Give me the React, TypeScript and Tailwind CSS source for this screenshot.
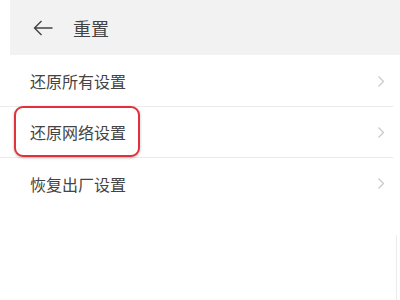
import React from "react";

const font = { fontFamily: '"Noto Sans CJK SC", "Noto Sans", sans-serif' };

function Chevron() {
  return (
    <svg width="8" height="13" viewBox="0 0 8 13" className="shrink-0">
      <path d="M1.5 1.5 L6.5 6.5 L1.5 11.5" fill="none" stroke="#c8c8c8" strokeWidth="1.2" />
    </svg>
  );
}

function Row({ label, boxed, last }: { label: string; boxed?: boolean; last?: boolean }) {
  return (
    <div className={`relative flex h-[51px] items-center justify-between pl-[30px] pr-[8px] ${last ? "" : "border-b border-[#ebebeb]"}`}>
      <span className="text-[16px] text-[#444] leading-none">{label}</span>
      <Chevron />
      {boxed && (
        <div className="absolute left-[14px] top-[-1px] h-[51px] w-[126px] rounded-[9px] border-2 border-[#e0323c] bg-white shadow-[0_1px_3px_rgba(0,0,0,0.25)] flex items-center pl-[14px]">
          <span className="text-[16px] text-[#444] leading-none">{label}</span>
        </div>
      )}
    </div>
  );
}

export default function App() {
  return (
    <div className="relative w-[400px] h-[300px] bg-white overflow-hidden" style={font}>
      <div className="ml-[10px] h-[55px] bg-[#f2f2f2] flex items-center pl-[22px]">
        <svg width="22" height="18" viewBox="0 0 22 18">
          <path d="M9.5 2 L2.5 9 L9.5 16 M2.5 9 L20.5 9" fill="none" stroke="#444" strokeWidth="1.4" />
        </svg>
        <span className="ml-[19px] text-[18px] text-[#444] leading-none">重置</span>
      </div>
      <div className="mt-[1px] w-[393px]">
        <Row label="还原所有设置" />
        <Row label="还原网络设置" boxed />
        <Row label="恢复出厂设置" last />
      </div>
      <div className="absolute right-[3px] top-[235px] h-[65px] w-[1px] bg-[#ececec]" />
    </div>
  );
}
